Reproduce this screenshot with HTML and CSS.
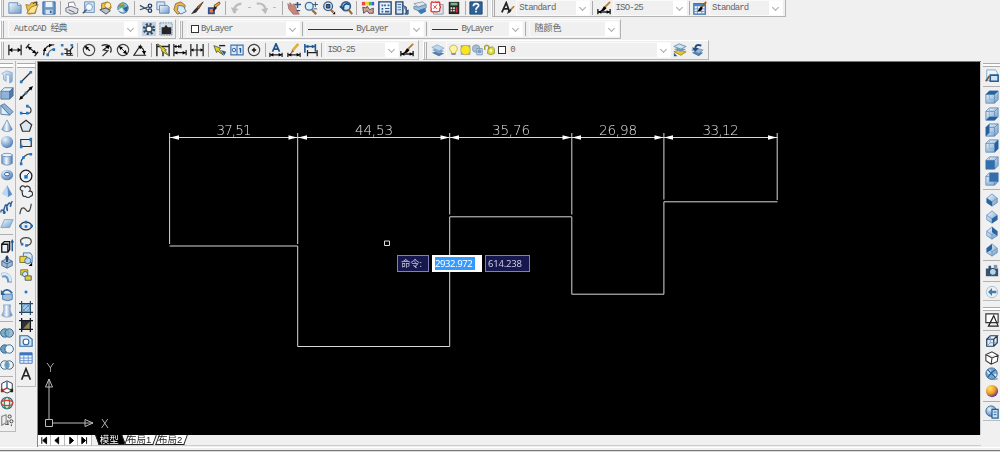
FILE: index.html
```html
<!DOCTYPE html>
<html lang="zh-CN">
<head>
<meta charset="utf-8">
<title>AutoCAD</title>
<link rel="stylesheet" href="styles.css">
</head>
<body>

<!-- icon set -->
<svg class="defs">
  <defs>
    <linearGradient id="gb" x1="0" y1="0" x2="1" y2="1"><stop offset="0" stop-color="#f4faff"/><stop offset="1" stop-color="#6f9cc9"/></linearGradient>
    <linearGradient id="gc"><stop offset="0" stop-color="#6d96c4"/><stop offset=".45" stop-color="#eff7ff"/><stop offset="1" stop-color="#4e7bb0"/></linearGradient>
    <radialGradient id="gs" cx=".35" cy=".3" r=".75"><stop offset="0" stop-color="#e8f4ff"/><stop offset="1" stop-color="#4b78b4"/></radialGradient>
    <radialGradient id="go" cx=".35" cy=".3" r=".75"><stop offset="0" stop-color="#ffe45c"/><stop offset=".55" stop-color="#f09a2c"/><stop offset="1" stop-color="#4a2c98"/></radialGradient>
  </defs>

  <!-- standard toolbar -->
  <symbol id="new" viewBox="0 0 16 16"><path d="M1 2h10l4 3v9H1z" fill="url(#gb)" stroke="#5b86b5"/><path d="M11 2v3h4" fill="#fff" stroke="#5b86b5"/></symbol>
  <symbol id="open" viewBox="0 0 16 16"><path d="M1 4l4 1 2-3 7-1-2 13-8 1z" fill="#e9c046" stroke="#a67d1e"/><path d="M2 14l5-7 8-3-4 10z" fill="#f9e49b" stroke="#a67d1e"/><path d="M9 3l4-2v4" fill="none" stroke="#333"/></symbol>
  <symbol id="save" viewBox="0 0 16 16"><path d="M1 1h14v14H1z" fill="#6b97c9" stroke="#335f94"/><path d="M4 1h8v6H4z" fill="#eaf3fc"/><path d="M4 10h8v5H4z" fill="#d5e2ef"/><path d="M9 11h2v3H9z" fill="#335f94"/></symbol>
  <symbol id="print" viewBox="0 0 16 16"><path d="M4 7V2l6-1 2 5" fill="#fff" stroke="#778"/><path d="M1 8l6-2 8 3-1 5-7 1-6-3z" fill="#dde2ea" stroke="#667"/><path d="M4 10l7 3" stroke="#556"/></symbol>
  <symbol id="preview" viewBox="0 0 16 16"><path d="M3 1h11v12H3z" fill="#d6e7f8" stroke="#5b86b5"/><circle cx="8" cy="7" r="4" fill="#f4faff" stroke="#6d90b6"/><path d="M5 10l-4 4" stroke="#555" stroke-width="2"/></symbol>
  <symbol id="publish" viewBox="0 0 16 16"><path d="M3 3l7-2 4 6-4 6-7-3z" fill="#f3c243" stroke="#8b6a1c"/><circle cx="10" cy="5" r="3.5" fill="#fff0ba" stroke="#a57b1c"/><path d="M1 10l7-2 5 3-5 4z" fill="#b7c1d0" stroke="#445"/></symbol>
  <symbol id="dwf" viewBox="0 0 16 16"><circle cx="8" cy="8" r="6" fill="#82b5d8" stroke="#4c7795"/><path d="M3 6l5-5 2 5-3 4z" fill="#51ad78"/><path d="M8 8l6-2-2 7z" fill="#2f6097"/><path d="M2 11l5-4 2 6z" fill="#e0eef7"/><path d="M5 4l4-1" stroke="#ef8c2c" stroke-width="2"/></symbol>
  <symbol id="cut" viewBox="0 0 16 16"><path d="M1 5l9 5M1 10l9-3" stroke="#3e536c" stroke-width="1.5"/><circle cx="12.500" cy="5.500" r="2" fill="none" stroke="#273d68" stroke-width="1.5"/><circle cx="12.500" cy="11" r="2" fill="none" stroke="#273d68" stroke-width="1.5"/></symbol>
  <symbol id="copy" viewBox="0 0 16 16"><path d="M1 1h9v9H1z" fill="#d6e7f8" stroke="#5b86b5"/><path d="M4 5h9l2 2v7H4z" fill="url(#gb)" stroke="#5b86b5"/></symbol>
  <symbol id="paste" viewBox="0 0 16 16"><path d="M3 3l6-2 5 4-2 8-7 2-4-5z" fill="#e8b74c" stroke="#8f6b25"/><path d="M6 5l6 1 3 6-6 3-4-4z" fill="#dcebfa" stroke="#4c79a8"/></symbol>
  <symbol id="brush" viewBox="0 0 16 16"><path d="M15 1L8 7l2 2z" fill="#a56d2d" stroke="#593716"/><path d="M8 7l2 2-3 4-6 2 4-5z" fill="#333"/></symbol>
  <symbol id="block" viewBox="0 0 16 16"><path d="M14 1L8 5l1 3 6-5z" fill="#f1a23a" stroke="#754c18"/><path d="M2 8h6v6H2z" fill="#ef7b2d" stroke="#334f91" stroke-width="2"/><path d="M8 7l2 1-3 3" stroke="#222" stroke-width="2" fill="none"/></symbol>
  <symbol id="undo" viewBox="0 0 16 16"><path d="M6 14C3 9 6 4 13 3" fill="none" stroke="#bcbcbc" stroke-width="2.4"/><path d="M1 7l3 7 6-5z" fill="#bcbcbc"/></symbol>
  <symbol id="redo" viewBox="0 0 16 16"><path d="M2 3c6-1 10 2 10 8" fill="none" stroke="#bcbcbc" stroke-width="2.4"/><path d="M7 9l5 6 3-7z" fill="#bcbcbc"/></symbol>
  <symbol id="pan" viewBox="0 0 16 16"><path d="M1 3l3 3-1-4 4 3 1-2 3 7 3 5H7L2 9z" fill="#c98579" stroke="#a5736b"/><path d="M12 1v7M9 4h7M11 11h4" stroke="#2f5787" stroke-width="1.7"/></symbol>
  <symbol id="zoomrt" viewBox="0 0 16 16"><circle cx="6" cy="6" r="4.5" fill="#d9efff" stroke="#467099" stroke-width="1.5"/><path d="M9 10l5 5" stroke="#a06b35" stroke-width="2.5"/><path d="M13 1v6M10 4h6M11 9h4" stroke="#284d77"/></symbol>
  <symbol id="zoomwin" viewBox="0 0 16 16"><circle cx="7" cy="6" r="5" fill="#cae4fb" stroke="#365f8b" stroke-width="1.5"/><path d="M5 4h4v4H5z" fill="#456a92" stroke="#223"/><path d="M10 10l3 3" stroke="#a06b35" stroke-width="2.5"/><path d="M15 12v3h-3z"/></symbol>
  <symbol id="zoomprev" viewBox="0 0 16 16"><circle cx="8" cy="6" r="5" fill="#cae4fb" stroke="#365f8b" stroke-width="2"/><path d="M11 10l4 5" stroke="#a06b35" stroke-width="2.5"/><path d="M12 4C7 2 5 4 5 9L1 6" fill="none" stroke="#214e82" stroke-width="2"/></symbol>
  <symbol id="props" viewBox="0 0 16 16"><path d="M1 1h4v4H1z" fill="#e44"/><path d="M5 1h4v4H5z" fill="#f5d42d"/><path d="M9 1h3v4H9z" fill="#3b5"/><path d="M12 1h3v4h-3z" fill="#45d"/><path d="M2 7l4 1 1-2 3 4 4-2v6H9l-2-3-4 3z" fill="#d8a290" stroke="#4a4259"/></symbol>
  <symbol id="dcenter" viewBox="0 0 16 16"><path d="M1 1h14v14H1z" fill="#e8f1fb" stroke="#24446f" stroke-width="1.6"/><path d="M4 4h2v2H4zM7 4h2v2H7zM11 4h2v2h-2zM4 8h2v2H4zM8 8h5v1H8zM4 11h2v2H4zM8 11h5v2H8z" fill="#31619a"/></symbol>
  <symbol id="palette" viewBox="0 0 16 16"><path d="M1 1h8v14H1z" fill="#d6e7f8" stroke="#24446f" stroke-width="1.6"/><path d="M3 4h4M3 7h4M3 10h4" stroke="#31619a"/><path d="M9 5l4 2v7M15 10v5h-4z" stroke="#24446f" fill="#5c8ac0"/></symbol>
  <symbol id="sheets" viewBox="0 0 16 16"><path d="M1 3l10-2 4 3-9 3z" fill="#dbe8f3" stroke="#8499aa"/><path d="M1 6l5 1 9-3v4l-9 3-5-2z" fill="#9fbdd7" stroke="#6e8da8"/><path d="M5 11l9-3 1 4-6 3z" fill="#397abb"/></symbol>
  <symbol id="markup" viewBox="0 0 16 16"><path d="M4 4h11v11H4z" fill="#dce3ea" stroke="#8b96a3"/><path d="M2 1q3 1 4 0 2 1 4 0 2 1 1 4 2 2 0 4 1 3-2 3-2 1-4 0-3 1-4-1 1-2 0-4 1-2 0-4z" fill="#fff" stroke="#e33131" stroke-width="1.4"/><path d="M4 5l4 4M8 4L4 9" stroke="#e33131"/></symbol>
  <symbol id="calc" viewBox="0 0 16 16"><path d="M2 1h12v14H2z" fill="#272727"/><path d="M4 2h8v3H4z" fill="#71b587"/><path d="M4 7h2v2H4zM7 7h2v2H7zM4 10h2v2H4zM7 10h2v2H7z" fill="#ddd"/><path d="M10 7h2v6h-2z" fill="#d33"/></symbol>
  <symbol id="help" viewBox="0 0 16 16"><path d="M1 1h14v14H1z" fill="#2d6296" stroke="#1d436d"/><path d="M5 6c0-4 6-4 6-1 0 2-3 2-3 5" stroke="#fff" stroke-width="2" fill="none"/><path d="M7 11h2v2H7z" fill="#fff"/></symbol>
  <symbol id="textstyle" viewBox="0 0 16 16"><path d="M1 13L6 2l4 11M3 9h6" fill="none" stroke="#222" stroke-width="2"/><path d="M15 6l-4 4" stroke="#b57a2d" stroke-width="2"/><path d="M11 9l1 2-5 4 1-4z" fill="#222"/></symbol>
  <symbol id="dimstyle" viewBox="0 0 16 16"><path d="M15 1L9 7" stroke="#b57a2d" stroke-width="2"/><path d="M8 6l3 2-3 3-4 1z"/><path d="M1 9v6M15 9v6M1 12.5h14" stroke="#222" stroke-width="1.6"/><path d="M1 12.5l4-2v4zM15 12.5l-4-2v4z"/></symbol>
  <symbol id="tabstyle" viewBox="0 0 16 16"><path d="M1 3h13v12H1z" fill="#f0f6ff" stroke="#316bb0" stroke-width="1.5"/><path d="M1 3h13v3H1z" fill="#4b86c8"/><path d="M1 9h13M1 12h13M5 6v9M10 6v9" stroke="#6694cb"/><path d="M15 1l-5 6" stroke="#96642b" stroke-width="2"/><path d="M9 6l2 2-2 3-4 1z"/></symbol>

  <!-- workspace -->
  <symbol id="gear" viewBox="0 0 16 16"><path d="M0 0h16v16H0z" fill="#c3d3e4"/><circle cx="8" cy="8" r="5.500" fill="none" stroke="#354b62" stroke-width="3" stroke-dasharray="2.300 2.020"/><circle cx="8" cy="8" r="3.5" fill="#fff" stroke="#354b62" stroke-width="1.6"/></symbol>
  <symbol id="myspace" viewBox="0 0 16 16"><path d="M1 1h14v14H1z" fill="#d5dfeb" stroke="#6687a9" stroke-dasharray="2 1"/><path d="M3 6h3l2-3 2 3h4v8H3z" fill="#252525"/></symbol>

  <!-- dimension toolbar -->
  <symbol id="dimlin" viewBox="0 0 16 16"><path d="M1 2v12M15 2v12M1 8h14" stroke="#222" stroke-width="1.4"/><path d="M1 8l4-2.500v5zM15 8l-4-2.500v5z"/></symbol>
  <symbol id="dimali" viewBox="0 0 16 16"><path d="M1 6l4-5M11 15l4-5M3 4l10 8" stroke="#222" stroke-width="1.4"/><path d="M3 4l5 1-3 3zM13 12l-5-1 3-3z"/></symbol>
  <symbol id="dimarc" viewBox="0 0 16 16"><path d="M2 14C2 6 6 2 14 2" fill="none" stroke="#222" stroke-width="1.4"/><path d="M7 14c0-4 3-7 7-7" fill="none" stroke="#777" stroke-width="1.4"/><path d="M1 9l2-4 2 4zM8 1l4 1-4 3z"/><path d="M5 12h3v3H5zM12 6h3v3h-3z" fill="#2472b8"/></symbol>
  <symbol id="dimord" viewBox="0 0 16 16"><path d="M1 1h3v3H1zM1 11h3v3H1zM12 1h3v3h-3z" fill="#397cb8"/><path d="M5 7h3v7h7M8 9h3l4-5M5 12h9M12 8v6" fill="none" stroke="#222" stroke-width="1.4"/></symbol>
  <symbol id="dimrad" viewBox="0 0 16 16"><circle cx="8" cy="8" r="6.500" fill="none" stroke="#444" stroke-width="1.3"/><path d="M9 9L4 4" stroke="#111" stroke-width="1.5"/><path d="M3 3l5 2-3 3z"/></symbol>
  <symbol id="dimjog" viewBox="0 0 16 16"><path d="M3 3c8-3 13 2 10 8M10 4L5 8l5 1-6 6" fill="none" stroke="#333" stroke-width="1.5"/><path d="M12 2l-1 5-4-3z"/></symbol>
  <symbol id="dimdia" viewBox="0 0 16 16"><circle cx="8" cy="8" r="6.500" fill="none" stroke="#444" stroke-width="1.3"/><path d="M4 4l8 8" stroke="#111"/><path d="M3 3l5 2-3 3zM13 13l-5-2 3-3z"/></symbol>
  <symbol id="dimang" viewBox="0 0 16 16"><path d="M9 2L1 14h14M7 4c4 1 6 4 6 9" fill="none" stroke="#222" stroke-width="1.4"/><path d="M6 3l5 1-3 3zM13 13l-3-4h5z"/></symbol>
  <symbol id="quick" viewBox="0 0 16 16"><path d="M1 1v14M15 1v14M8 8v7M1 4h14" stroke="#222" stroke-width="1.6"/><path d="M2 1l10 7-2 0 4 6-8-5 1-1z" fill="#e4d72b" stroke="#55501a" stroke-width=".8"/></symbol>
  <symbol id="dimbase" viewBox="0 0 16 16"><path d="M1 1v14M9 1v5M15 8v6M1 4h8M1 11h14" stroke="#222" stroke-width="1.4"/><path d="M1 4l3-2v4zM9 4L6 2v4zM1 11l4-2v4zM15 11l-4-2v4z"/></symbol>
  <symbol id="dimcont" viewBox="0 0 16 16"><path d="M1 1v14M8 1v14M15 1v14M1 8h14" stroke="#222" stroke-width="1.4"/><path d="M1 8l3-2v4zM15 8l-3-2v4z"/></symbol>
  <symbol id="leader" viewBox="0 0 16 16"><path d="M1 3l8 3-2 1 5 7-7-5-1 2z" fill="#d9d527" stroke="#555"/><path d="M7 3h7" stroke="#222" stroke-width="1.6"/><path d="M9 8l4 6 2-4z" fill="#285a8c"/></symbol>
  <symbol id="tol" viewBox="0 0 16 16"><path d="M1 2.500h14v11H1zM8 3v10" fill="#dceafb" stroke="#3e72ae" stroke-width="1.3"/><circle cx="4.500" cy="8" r="2" fill="none" stroke="#245795"/><path d="M10.500 6.500H12V11" stroke="#245795" stroke-width="1.5" fill="none"/></symbol>
  <symbol id="center" viewBox="0 0 16 16"><circle cx="8" cy="8" r="6.500" fill="none" stroke="#444" stroke-width="1.3"/><path d="M8 5.500v5M5.500 8h5" stroke="#111" stroke-width="1.6"/></symbol>
  <symbol id="dimedit" viewBox="0 0 16 16"><path d="M4 10L8 1l4 9M5 7h6" fill="none" stroke="#1e548d" stroke-width="2"/><path d="M1 11v5M15 11v5M1 13.500h14" stroke="#222" stroke-width="1.4"/><path d="M1 13.500l4-2v4zM15 13.500l-4-2v4z"/></symbol>
  <symbol id="dimtedit" viewBox="0 0 16 16"><path d="M13 1L6 9" stroke="#dfb32f" stroke-width="3"/><path d="M6 8l-2 4 4-2z" fill="#a15a3a"/><path d="M1 11v5M15 11v5M1 13.500h14" stroke="#222" stroke-width="1.4"/><path d="M1 13.500l4-2v4zM15 13.500l-4-2v4z"/></symbol>
  <symbol id="dimupd" viewBox="0 0 16 16"><path d="M1 1v10M13 1v9M1 4h12" stroke="#24588e" stroke-width="1.8"/><path d="M4 8v7M15 8v7M4 11h11" stroke="#222" stroke-width="1.4"/><path d="M1 4l4-2v4zM13 4L9 2v4z" fill="#24588e"/></symbol>

  <!-- layers -->
  <symbol id="layers" viewBox="0 0 16 16"><path d="M1 11l6-2 8 3-6 3z" fill="#537cad"/><path d="M1 8l6-2 8 3-6 3z" fill="#7fa6cc"/><path d="M1 5l6-3 8 4-6 3z" fill="#bdd7ed" stroke="#759abd" stroke-width=".7"/></symbol>
  <symbol id="bulb" viewBox="0 0 16 16"><path d="M5 11C0 6 3 1 8 1s8 5 3 10v2H5z" fill="#fff3a0" stroke="#a8953d"/><path d="M5 13h6v2H5z" fill="#778"/></symbol>
  <symbol id="sun" viewBox="0 0 16 16"><path d="M1 1h14v14H1z" fill="#8fa9b5"/><circle cx="8" cy="8" r="6.800" fill="#f8e624" stroke="#cba921"/></symbol>
  <symbol id="freeze" viewBox="0 0 16 16"><circle cx="6" cy="6" r="5.500" fill="#a8bed2" stroke="#7892aa"/><path d="M7 6h8v9H7z" fill="#dce6ef" stroke="#5e7f9f"/><circle cx="11" cy="10" r="3" fill="#7ba0c2"/></symbol>
  <symbol id="lock" viewBox="0 0 16 16"><path d="M1 8V3q3-4 6 0v4" fill="none" stroke="#a4a33a" stroke-width="2.2"/><path d="M6 6l6-3 3 3v7l-5 2-5-2z" fill="#dadd3a" stroke="#7e7e26"/><circle cx="10" cy="9" r="2" fill="#fafac5"/></symbol>
  <symbol id="laycur" viewBox="0 0 16 16"><path d="M1 10l6-2 8 2-6 4z" fill="#e1c52c" stroke="#9d8721"/><path d="M1 7l6-2 8 2-6 3z" fill="#6e99c0"/><path d="M1 4l6-3 8 3-6 3z" fill="#cfe2f2" stroke="#658dae"/><path d="M1 15v-4l4 4z" fill="#245893"/></symbol>
  <symbol id="layprev" viewBox="0 0 16 16"><path d="M2 11l6-2 7 2-5 4z" fill="#557da8"/><path d="M2 8l6-2 7 2-5 4z" fill="#97b7d3" stroke="#5d82a8" stroke-width=".7"/><path d="M13 3C8 1 6 3 6 7" fill="none" stroke="#214e82" stroke-width="2.300"/><path d="M2 5l8 1-4 4z" fill="#214e82"/></symbol>

  <!-- modeling -->
  <symbol id="polysolid" viewBox="0 0 16 16"><path d="M2 4l6-3 6 2v10l-3 2V6L7 5v8l-3-2V6z" fill="url(#gb)" stroke="#7fa4cc" stroke-width=".8"/></symbol>
  <symbol id="box" viewBox="0 0 16 16"><path d="M1 6h10v9H1z" fill="#8fb2d7"/><path d="M1 6l4-4h10l-4 4z" fill="#e8f2fc"/><path d="M11 6l4-4v9l-4 4z" fill="#4f7bad"/><path d="M1 6h10v9H1zM1 6l4-4h10v9l-4 4M11 6l4-4" fill="none" stroke="#365c88" stroke-width=".8"/></symbol>
  <symbol id="wedge" viewBox="0 0 16 16"><path d="M1 4l4-2 10 9-4 4z" fill="#8fb4d9" stroke="#4c759f"/><path d="M1 4v10l10 1z" fill="#dcecfa" stroke="#4c759f"/></symbol>
  <symbol id="cone" viewBox="0 0 16 16"><path d="M8 1l6 11q-6 5-12 0z" fill="url(#gc)" stroke="#6586aa" stroke-width=".8"/></symbol>
  <symbol id="sphere" viewBox="0 0 16 16"><circle cx="8" cy="8" r="7" fill="url(#gs)"/></symbol>
  <symbol id="cyl" viewBox="0 0 16 16"><path d="M2 3v10q6 4 12 0V3z" fill="url(#gc)" stroke="#527aa8" stroke-width=".8"/><ellipse cx="8" cy="3.500" rx="6" ry="2" fill="#e8f3ff" stroke="#527aa8" stroke-width=".8"/></symbol>
  <symbol id="torus" viewBox="0 0 16 16"><ellipse cx="8" cy="8" rx="7" ry="6" fill="url(#gs)"/><ellipse cx="8" cy="7" rx="3" ry="2" fill="#f4faff" stroke="#2d5a8c"/></symbol>
  <symbol id="pyr" viewBox="0 0 16 16"><path d="M8 1l6 11-5 3z" fill="#5e8fc5"/><path d="M8 1l1 14-7-4z" fill="#b9d7f2"/></symbol>
  <symbol id="helix" viewBox="0 0 16 16"><path d="M1 13q0-4 3-2t1 3 0-6 3-1 0 3 1-6 3-1 0 3 2-6" fill="none" stroke="#2f5f9b" stroke-width="1.6"/></symbol>
  <symbol id="plane" viewBox="0 0 16 16"><path d="M5 3h10l-4 9H1z" fill="url(#gb)" stroke="#7ea2cc"/></symbol>
  <symbol id="extr" viewBox="0 0 16 16"><path d="M2 6h7v9H2zM2 6l3-3h6v9l-2 3" fill="#e9eff6" stroke="#111" stroke-width="1.5"/><path d="M14 14V3" stroke="#1d5598" stroke-width="1.6"/><path d="M12 4l2-4 2 4z" fill="#1d5598"/></symbol>
  <symbol id="press" viewBox="0 0 16 16"><path d="M2 7l6-3 6 3v5l-6 3-6-3z" fill="#9db9d6" stroke="#46658a"/><path d="M2 7l6 3 6-3M8 10v5" fill="none" stroke="#46658a"/><path d="M8 8V2" stroke="#183c6b" stroke-width="2"/><path d="M5.500 4L8 0l2.500 4z" fill="#183c6b"/></symbol>
  <symbol id="sweep" viewBox="0 0 16 16"><path d="M2 5c6-2 9 2 9 8" fill="none" stroke="#6d95c0" stroke-width="5.500"/><path d="M2 4c6-2 10 2 10 8" fill="none" stroke="#dbeaf8" stroke-width="2.800"/></symbol>
  <symbol id="revolve" viewBox="0 0 16 16"><path d="M3 7h11v6q-5 3-11 0z" fill="#9cc1e4" stroke="#4876a4"/><path d="M14 6C10 1 6 1 3 5" fill="none" stroke="#2d659e" stroke-width="2"/><path d="M1 2v6h5z" fill="#2d659e"/></symbol>
  <symbol id="loft" viewBox="0 0 16 16"><path d="M4 1h8q-2 6 2 12-6 4-12 0 4-6 2-12z" fill="url(#gc)" stroke="#7598bf" stroke-width=".8"/></symbol>
  <symbol id="union" viewBox="0 0 16 16"><circle cx="5.500" cy="8" r="4.800" fill="#7fb0c9" stroke="#285b83"/><circle cx="10.500" cy="8" r="4.800" fill="#7fb0c9" fill-opacity=".8" stroke="#285b83"/></symbol>
  <symbol id="subtract" viewBox="0 0 16 16"><circle cx="5.500" cy="8" r="4.800" fill="#6ba0c6" stroke="#285b83"/><circle cx="10.500" cy="8" r="4.800" fill="#eef5fb" stroke="#285b83"/></symbol>
  <symbol id="intersect" viewBox="0 0 16 16"><circle cx="5.500" cy="8" r="4.800" fill="#edf5fb" stroke="#285b83"/><circle cx="10.500" cy="8" r="4.800" fill="none" stroke="#285b83"/><path d="M8 4q4 4 0 8-4-4 0-8z" fill="#5f9cc5"/></symbol>
  <symbol id="move3" viewBox="0 0 16 16"><path d="M2 4l6-3 6 3v8l-6 3-6-3z" fill="#fff" stroke="#334" stroke-width="1.1"/><path d="M8 9V2" stroke="#2d69b0" stroke-width="1.6"/><path d="M8 9l5 3" stroke="#2c8d4b" stroke-width="1.6"/><path d="M8 9l-5 3" stroke="#d22" stroke-width="1.6"/><path d="M1 10h3v4H1z" fill="#a22"/><path d="M12 10h3v4h-3z" fill="#222"/></symbol>
  <symbol id="rot3" viewBox="0 0 16 16"><circle cx="8" cy="8" r="6.500" fill="none" stroke="#326594" stroke-width="1.4"/><ellipse cx="8" cy="8" rx="3" ry="6.500" fill="none" stroke="#35955b" stroke-width="1.5"/><ellipse cx="8" cy="8" rx="6.500" ry="3" fill="none" stroke="#d63b32" stroke-width="1.5"/></symbol>
  <symbol id="align3" viewBox="0 0 16 16"><path d="M2 14V4l5-2v9z" fill="#eee" stroke="#888" stroke-width="1.3"/><circle cx="11" cy="4" r="1.800" fill="none" stroke="#333"/><circle cx="13" cy="9.500" r="1.800" fill="none" stroke="#333"/><path d="M9 8v5M6 13h4M13 13v2" stroke="#333" fill="none"/></symbol>

  <!-- draw -->
  <symbol id="line" viewBox="0 0 16 16"><path d="M2 14L14 2" stroke="#333" stroke-width="1.5"/><path d="M1 12h3v3H1zM12 1h3v3h-3z" fill="#2176c4"/></symbol>
  <symbol id="xline" viewBox="0 0 16 16"><path d="M2 14L14 2" stroke="#222" stroke-width="1.8"/><path d="M0 16l2-5 3 3zM16 0l-5 2 3 3z"/><path d="M6.500 6.500h3v3h-3z" fill="#4a6f96"/></symbol>
  <symbol id="pline" viewBox="0 0 16 16"><path d="M2 12h8c5 0 5-7 0-8" fill="none" stroke="#444" stroke-width="1.4"/><path d="M1 10h3v3H1zM8 10h3v3H8zM8 2h3v3H8z" fill="#2176c4"/></symbol>
  <symbol id="polygon" viewBox="0 0 16 16"><path d="M8 1.500l6.500 5L12 14H4L1.500 6.500z" fill="#dfe8f0" stroke="#333" stroke-width="1.4"/></symbol>
  <symbol id="rect" viewBox="0 0 16 16"><path d="M2 4h12v8H2z" fill="#e4edf6" stroke="#333" stroke-width="1.4"/><path d="M1 10h3v4H1zM12 2h3v4h-3z" fill="#2176c4"/></symbol>
  <symbol id="arc" viewBox="0 0 16 16"><path d="M2 14C2 8 7 2 14 2" fill="none" stroke="#444" stroke-width="1.4"/><path d="M1 12h3v3H1zM3.500 5h3v3h-3zM12 1h3v3h-3z" fill="#2176c4"/></symbol>
  <symbol id="circle" viewBox="0 0 16 16"><circle cx="8" cy="8" r="6.700" fill="#edf4fa" stroke="#222" stroke-width="1.5"/><path d="M7 9l5-5" stroke="#222"/><path d="M6 7h4v4H6z" fill="#2176c4"/></symbol>
  <symbol id="cloud" viewBox="0 0 16 16"><path d="M4 7a3 3 0 1 1 3-4.500A3 3 0 1 1 12 7a3 3 0 0 1 1 6 3.500 3.500 0 0 1-5.500 0A2.800 2.800 0 0 1 4 9.500 2 2 0 0 1 4 7z" fill="#eef3f8" stroke="#333" stroke-width="1.3"/></symbol>
  <symbol id="spline" viewBox="0 0 16 16"><path d="M1 14C2 6 5 5 8 9s5 1 6-7" fill="none" stroke="#444" stroke-width="1.4"/></symbol>
  <symbol id="ellipse" viewBox="0 0 16 16"><ellipse cx="8" cy="8" rx="6.500" ry="4.500" fill="#e4edf6" stroke="#333" stroke-width="1.4"/><path d="M0 6.500h3v3H0zM13 6.500h3v3h-3zM6.500 7h3v3h-3zM6.500 2h3v3h-3z" fill="#2176c4"/></symbol>
  <symbol id="earc" viewBox="0 0 16 16"><path d="M3 10C0 6 3 3 8 3c8 0 8 9 0 9" fill="none" stroke="#444" stroke-width="1.4"/><path d="M2 9h3v3H2zM7 10.500h3v3H7z" fill="#2176c4"/></symbol>
  <symbol id="insert" viewBox="0 0 16 16"><path d="M5 1h8l2 3v8H5z" fill="#dce9f7" stroke="#336fa5"/><path d="M1 5h8v7H1z" fill="#ecd63c" stroke="#756c26"/><circle cx="10" cy="10" r="3.500" fill="#bcd6ec" stroke="#356a9a"/><path d="M15 12v4h-4z"/></symbol>
  <symbol id="mkblock" viewBox="0 0 16 16"><path d="M2 2h8v6H2z" fill="#ecd63c" stroke="#756c26"/><circle cx="7" cy="7" r="3" fill="#d8e8f5" stroke="#316896"/><path d="M7 9h7v5H7z" fill="#e7cb39" stroke="#405b67"/></symbol>
  <symbol id="point" viewBox="0 0 16 16"><path d="M6.500 6.500h3v3h-3z" fill="#2176c4"/></symbol>
  <symbol id="hatch" viewBox="0 0 16 16"><path d="M3 3h10v10H3z" fill="#9fc8ea"/><path d="M3 0v16M13 0v16M0 3h16M0 13h16" stroke="#24435f" stroke-width="1.3"/><path d="M3 8l5-5M3 13L13 3M8 13l5-5M3 8l5 5M8 3l5 5" stroke="#3d75a6" stroke-width=".8"/></symbol>
  <symbol id="grad" viewBox="0 0 16 16"><path d="M3 3h10v10H3z" fill="#30303a"/><path d="M13 3v10H4z" fill="#96854d"/><path d="M3 0v16M13 0v16M0 3h16M0 13h16" stroke="#151b26" stroke-width="1.5"/></symbol>
  <symbol id="region" viewBox="0 0 16 16"><path d="M1 2h9l5 4v8H1z" fill="#d5e7f7" stroke="#32679b" stroke-width="1.3"/><circle cx="8" cy="9" r="3.300" fill="#fff" stroke="#32679b" stroke-width="1.3"/></symbol>
  <symbol id="table" viewBox="0 0 16 16"><path d="M1 2h14v12H1z" fill="#f1f7ff" stroke="#3d74bd"/><path d="M1 2h14v3H1z" fill="#3d74bd"/><path d="M1 8h14M1 11h14M5.500 5v9M10.500 5v9" stroke="#6492cf"/></symbol>
  <symbol id="mtext" viewBox="0 0 16 16"><path d="M3 14.500L8 2l5 12.500M5 10h6" fill="none" stroke="#222" stroke-width="1.9"/></symbol>

  <!-- views -->
  <symbol id="named" viewBox="0 0 16 16"><path d="M2 1h10l2 3v9H2z" fill="#edf5fc" stroke="#7ea1c1"/><path d="M6 7h9v7H6z" fill="#cfe2f4" stroke="#235c91" stroke-width="1.8"/><path d="M1 14l4-6" stroke="#80592f" stroke-width="2"/></symbol>
  <symbol id="cube" viewBox="0 0 16 16"><path d="M1 5l4-4h10v10l-4 4H1z" fill="url(#gb)"/><path d="M1 5h10v10H1zM1 5l4-4h10l-4 4M15 1v10l-4 4" fill="none" stroke="#5f8cb8"/><path d="M5 1v10h10M5 11l-4 4" stroke="#8db2d3" fill="none"/></symbol>
  <symbol id="vtop" viewBox="0 0 16 16"><use href="#cube"/><path d="M1 5l4-4h10l-4 4z" fill="#27609d"/></symbol>
  <symbol id="vbot" viewBox="0 0 16 16"><use href="#cube"/><path d="M1 15l4-4h10l-4 4z" fill="#27609d"/></symbol>
  <symbol id="vleft" viewBox="0 0 16 16"><use href="#cube"/><path d="M1 5l4-4v10l-4 4z" fill="#27609d"/></symbol>
  <symbol id="vright" viewBox="0 0 16 16"><use href="#cube"/><path d="M11 5l4-4v10l-4 4z" fill="#27609d"/></symbol>
  <symbol id="vfront" viewBox="0 0 16 16"><use href="#cube"/><path d="M1 5h10v10H1z" fill="#336fae"/></symbol>
  <symbol id="vback" viewBox="0 0 16 16"><use href="#cube"/><path d="M5 1h10v10H5z" fill="#336fae"/></symbol>
  <symbol id="iso" viewBox="0 0 16 16"><path d="M8 1l6 5v5l-6 4-6-4V6z" fill="url(#gb)" stroke="#6c96c0"/><path d="M2 6l6 4 6-4M8 10v5" fill="none" stroke="#6c96c0"/></symbol>
  <symbol id="sw" viewBox="0 0 16 16"><use href="#iso"/><path d="M2 6l6 4v5l-6-4z" fill="#2b639d"/></symbol>
  <symbol id="se" viewBox="0 0 16 16"><use href="#iso"/><path d="M8 10l6-4v5l-6 4z" fill="#2b639d"/></symbol>
  <symbol id="ne" viewBox="0 0 16 16"><use href="#iso"/><path d="M8 1l6 5v5L8 7z" fill="#2b639d"/></symbol>
  <symbol id="nw" viewBox="0 0 16 16"><use href="#iso"/><path d="M8 1L2 6v5l6-4z" fill="#2b639d"/></symbol>
  <symbol id="camera" viewBox="0 0 16 16"><path d="M1 5h3V2h3v3h8v9H1z" fill="#39536e"/><circle cx="9" cy="9" r="4" fill="#b4d4ec" stroke="#18314c"/><path d="M10 1h4v4h-4z" fill="#779aba"/></symbol>
  <symbol id="back" viewBox="0 0 16 16"><circle cx="8" cy="8" r="6.500" fill="#eaf1f7" stroke="#a9bccd"/><path d="M8 3.500L3.500 8 8 12.500V9.500h5v-3H8z" fill="#497aa8"/></symbol>
  <symbol id="wire2d" viewBox="0 0 16 16"><path d="M1 1h14v10H1z" fill="#fff" stroke="#333" stroke-width="1.3"/><path d="M4 15L10 3l5 12z" fill="none" stroke="#222" stroke-width="1.4"/></symbol>
  <symbol id="wire3d" viewBox="0 0 16 16"><path d="M2 6h8v8H2zM2 6l4-4h8l-4 4M14 2v8l-4 4" fill="#e5eef7" stroke="#233c5b" stroke-width="1.4"/><path d="M6 2v8h8M6 10l-4 4" fill="none" stroke="#7496b8"/></symbol>
  <symbol id="hidden" viewBox="0 0 16 16"><path d="M8 1l7 4-1 7-7 3-6-4V4zM1 4l7 4 7-3M8 8l-1 7" fill="#fff" stroke="#333" stroke-width="1.2"/></symbol>
  <symbol id="realistic" viewBox="0 0 16 16"><ellipse cx="10" cy="13.500" rx="5" ry="1.500" fill="#aaa"/><circle cx="7.500" cy="7.500" r="6.500" fill="#71a8d3" stroke="#376593"/><path d="M2 5q5-5 5 2-3 3-5-2zM9 9q5-3 4 1-3 4-4-1z" fill="#d5ebfa"/><path d="M3 3q4 4 9 9M12 3Q8 5 3 12" stroke="#2b5f92" stroke-width="1.3" fill="none"/></symbol>
  <symbol id="concept" viewBox="0 0 16 16"><circle cx="8" cy="8" r="7" fill="url(#go)"/></symbol>
  <symbol id="vsman" viewBox="0 0 16 16"><circle cx="7" cy="7" r="6" fill="url(#gs)" stroke="#2d628f"/><path d="M8 5h7v10H8z" fill="#c7def3" stroke="#256195" stroke-width="1.4"/><path d="M10 8h3M10 11h3" stroke="#256195"/></symbol>
</svg>

<div class="toolbars">
  <div class="row row1">
    <div class="bar">
      <i class="grip"></i>
      <svg class="ic"><use href="#new"/></svg><svg class="ic"><use href="#open"/></svg><svg class="ic"><use href="#save"/></svg>
      <i class="sep"></i>
      <svg class="ic"><use href="#print"/></svg><svg class="ic"><use href="#preview"/></svg><svg class="ic"><use href="#publish"/></svg><svg class="ic"><use href="#dwf"/></svg>
      <i class="sep"></i>
      <svg class="ic"><use href="#cut"/></svg><svg class="ic"><use href="#copy"/></svg><svg class="ic"><use href="#paste"/></svg><svg class="ic"><use href="#brush"/></svg><svg class="ic"><use href="#block"/></svg>
      <i class="sep"></i>
      <svg class="ic"><use href="#undo"/></svg><i class="caret"></i><svg class="ic"><use href="#redo"/></svg><i class="caret wide"></i>
      <i class="sep"></i>
      <svg class="ic"><use href="#pan"/></svg><svg class="ic"><use href="#zoomrt"/></svg><svg class="ic"><use href="#zoomwin"/></svg><svg class="ic"><use href="#zoomprev"/></svg>
      <i class="sep"></i>
      <svg class="ic"><use href="#props"/></svg><svg class="ic"><use href="#dcenter"/></svg><svg class="ic"><use href="#palette"/></svg><svg class="ic"><use href="#sheets"/></svg><svg class="ic"><use href="#markup"/></svg><svg class="ic"><use href="#calc"/></svg>
      <i class="sep"></i>
      <svg class="ic"><use href="#help"/></svg>
    </div>
    <div class="bar styles">
      <i class="grip"></i>
      <svg class="ic"><use href="#textstyle"/></svg>
      <div class="combo w74">Standard<b></b></div>
      <i class="sep"></i>
      <svg class="ic"><use href="#dimstyle"/></svg>
      <div class="combo w73">ISO-25<b></b></div>
      <i class="sep"></i>
      <svg class="ic"><use href="#tabstyle"/></svg>
      <div class="combo w74">Standard<b></b></div>
    </div>
  </div>

  <div class="row row2">
    <div class="bar workspace">
      <i class="grip"></i>
      <div class="combo w130">AutoCAD 经典<b></b></div>
      <svg class="ic"><use href="#gear"/></svg><svg class="ic"><use href="#myspace"/></svg>
    </div>
    <div class="bar props">
      <i class="grip"></i>
      <div class="combo w112"><i class="swatch"></i>ByLayer<b></b></div>
      <i class="sep"></i>
      <div class="combo w119"><i class="lt"></i>ByLayer<b></b></div>
      <i class="sep"></i>
      <div class="combo w93"><i class="lt short"></i>ByLayer<b></b></div>
      <i class="sep"></i>
      <div class="combo w89">随颜色<b></b></div>
    </div>
  </div>

  <div class="row row3">
    <div class="bar">
      <i class="grip"></i>
      <svg class="ic"><use href="#dimlin"/></svg><svg class="ic"><use href="#dimali"/></svg><svg class="ic"><use href="#dimarc"/></svg><svg class="ic"><use href="#dimord"/></svg>
      <i class="sep"></i>
      <svg class="ic"><use href="#dimrad"/></svg><svg class="ic"><use href="#dimjog"/></svg><svg class="ic"><use href="#dimdia"/></svg><svg class="ic"><use href="#dimang"/></svg>
      <i class="sep"></i>
      <svg class="ic"><use href="#quick"/></svg><svg class="ic"><use href="#dimbase"/></svg><svg class="ic"><use href="#dimcont"/></svg>
      <i class="sep"></i>
      <svg class="ic"><use href="#leader"/></svg><svg class="ic"><use href="#tol"/></svg><svg class="ic"><use href="#center"/></svg>
      <i class="sep"></i>
      <svg class="ic"><use href="#dimedit"/></svg><svg class="ic"><use href="#dimtedit"/></svg><svg class="ic"><use href="#dimupd"/></svg>
      <i class="sep"></i>
      <div class="combo w74">ISO-25<b></b></div>
      <svg class="ic"><use href="#dimstyle"/></svg>
    </div>
    <div class="bar layerbar">
      <i class="grip"></i>
      <svg class="ic"><use href="#layers"/></svg>
      <div class="combo w225">
        <svg class="sm"><use href="#bulb"/></svg><svg class="sm"><use href="#sun"/></svg><svg class="sm"><use href="#freeze"/></svg><svg class="sm"><use href="#lock"/></svg><i class="swatch"></i>0<b></b>
      </div>
      <svg class="ic"><use href="#laycur"/></svg><svg class="ic"><use href="#layprev"/></svg>
    </div>
  </div>
</div>

<div class="main">
  <div class="col model">
    <i class="hgrip"></i>
    <svg class="ic"><use href="#polysolid"/></svg><svg class="ic"><use href="#box"/></svg><svg class="ic"><use href="#wedge"/></svg><svg class="ic"><use href="#cone"/></svg><svg class="ic"><use href="#sphere"/></svg><svg class="ic"><use href="#cyl"/></svg><svg class="ic"><use href="#torus"/></svg><svg class="ic"><use href="#pyr"/></svg><svg class="ic"><use href="#helix"/></svg><svg class="ic"><use href="#plane"/></svg>
    <i class="hsep"></i>
    <svg class="ic"><use href="#extr"/></svg><svg class="ic"><use href="#press"/></svg><svg class="ic"><use href="#sweep"/></svg><svg class="ic"><use href="#revolve"/></svg><svg class="ic"><use href="#loft"/></svg>
    <i class="hsep"></i>
    <svg class="ic"><use href="#union"/></svg><svg class="ic"><use href="#subtract"/></svg><svg class="ic"><use href="#intersect"/></svg>
    <i class="hsep"></i>
    <svg class="ic"><use href="#move3"/></svg><svg class="ic"><use href="#rot3"/></svg><svg class="ic"><use href="#align3"/></svg>
  </div>

  <div class="col draw">
    <i class="hgrip"></i>
    <svg class="ic"><use href="#line"/></svg><svg class="ic"><use href="#xline"/></svg><svg class="ic"><use href="#pline"/></svg><svg class="ic"><use href="#polygon"/></svg><svg class="ic"><use href="#rect"/></svg><svg class="ic"><use href="#arc"/></svg><svg class="ic"><use href="#circle"/></svg><svg class="ic"><use href="#cloud"/></svg><svg class="ic"><use href="#spline"/></svg><svg class="ic"><use href="#ellipse"/></svg><svg class="ic"><use href="#earc"/></svg><svg class="ic"><use href="#insert"/></svg><svg class="ic"><use href="#mkblock"/></svg><svg class="ic"><use href="#point"/></svg><svg class="ic"><use href="#hatch"/></svg><svg class="ic"><use href="#grad"/></svg><svg class="ic"><use href="#region"/></svg><svg class="ic"><use href="#table"/></svg><svg class="ic"><use href="#mtext"/></svg>
  </div>

  <div class="work">
    <div class="canvas">
      <svg class="drawing" viewBox="38 62 942 373">
        <!-- dimension and extension lines -->
        <g class="ln">
          <path d="M169.600 137.500H777.300"/>
          <path d="M169.600 133V244M297.700 133V244M449.700 133V214.500M571.800 133V214.500M663.900 133V199.500M777.200 133V200"/>
          <path d="M169.600 246H297.700V346.500H449.700V216.800H571.800V294.200H663.900V201.800H777.500"/>
        </g>
        <g class="arrows">
          <path d="M170 137.500l9-2.200v4.400zM298 137.500l9-2.200v4.400zM450 137.500l9-2.200v4.400zM572 137.500l9-2.200v4.400zM664 137.500l9-2.200v4.400z"/>
          <path d="M297.500 137.500l-9-2.200v4.400zM449.500 137.500l-9-2.200v4.400zM571.500 137.500l-9-2.200v4.400zM663.500 137.500l-9-2.200v4.400zM777 137.500l-9-2.200v4.400z"/>
        </g>
        <g class="dims">
          <text x="216.500" y="135" textLength="35">37,51</text>
          <text x="355" y="135" textLength="38">44,53</text>
          <text x="492" y="135" textLength="38">35,76</text>
          <text x="599" y="135" textLength="38">26,98</text>
          <text x="702.500" y="135" textLength="36">33,12</text>
        </g>
        <!-- pick box -->
        <path class="pick" d="M384.500 241h5v4.500h-5z"/>
        <!-- ucs icon -->
        <g class="ucs">
          <path d="M45.500 419.500h7v7h-7zM49 419.500V379M52.500 423H93M45.500 387L49 379l3.500 8zM85 419.500l8 3.500-8 3.500z"/>
          <text x="46.500" y="372">Y</text>
          <text x="100.500" y="428">X</text>
        </g>
      </svg>
      <div class="dyn">
        <span class="tip">命令:</span>
        <span class="tip input"><mark>2932.972</mark></span>
        <span class="tip num">614.238</span>
      </div>
    </div>
    <div class="tabs">
      <div class="nav">
        <svg viewBox="0 0 13 11"><path d="M4 2v7M9 2L5 5.500 9 9z"/></svg>
        <svg viewBox="0 0 13 11"><path d="M8 2L4 5.500 8 9z"/></svg>
        <svg viewBox="0 0 13 11"><path d="M5 2l4 3.500L5 9z"/></svg>
        <svg viewBox="0 0 13 11"><path d="M9 2v7M4 2l4 3.500L4 9z"/></svg>
      </div>
      <span class="tab on">模型</span><span class="tab">布局1</span><span class="tab">布局2</span>
    </div>
  </div>

  <div class="side">
    <div class="col">
      <i class="hgrip"></i>
      <svg class="ic"><use href="#named"/></svg>
      <i class="hsep"></i>
      <svg class="ic"><use href="#vtop"/></svg><svg class="ic"><use href="#vbot"/></svg><svg class="ic"><use href="#vleft"/></svg><svg class="ic"><use href="#vright"/></svg><svg class="ic"><use href="#vfront"/></svg><svg class="ic"><use href="#vback"/></svg>
      <i class="hsep"></i>
      <svg class="ic"><use href="#sw"/></svg><svg class="ic"><use href="#se"/></svg><svg class="ic"><use href="#ne"/></svg><svg class="ic"><use href="#nw"/></svg>
      <i class="hsep"></i>
      <svg class="ic"><use href="#camera"/></svg>
      <i class="hsep"></i>
      <svg class="ic"><use href="#back"/></svg>
    </div>
    <div class="col visual">
      <i class="hgrip"></i>
      <svg class="ic"><use href="#wire2d"/></svg>
      <i class="hsep"></i>
      <svg class="ic"><use href="#wire3d"/></svg><svg class="ic"><use href="#hidden"/></svg><svg class="ic"><use href="#realistic"/></svg><svg class="ic"><use href="#concept"/></svg>
      <i class="hsep"></i>
      <svg class="ic"><use href="#vsman"/></svg>
    </div>
  </div>
</div>
<div class="footer"></div>

</body>
</html>
```
FILE: styles.css
```css
* {
  box-sizing: border-box;
}

body {
  margin: 0;
  width: 1000px;
  height: 452px;
  overflow: hidden;
  background: #f0f0f0;
  font-family: "Liberation Mono", "Noto Sans CJK SC", monospace;
  font-size: 9px;
  color: #666;
  display: flex;
  flex-direction: column;
}

.defs {
  position: absolute;
  width: 0;
  height: 0;
}

/* toolbars */
.toolbars {
  height: 61px;
  flex: none;
}

.row {
  display: flex;
}

.row1 { height: 18px; }
.row2 { height: 21px; }
.row3 { height: 22px; }

.bar {
  display: flex;
  align-items: center;
  flex: none;
  border-right: 1px solid #b4b4b4;
  border-bottom: 1px solid #b4b4b4;
}

.row1 .bar {
  height: 17px;
  padding-right: 2px;
}

.row2 .bar {
  height: 20px;
  margin-top: 1px;
  border-top: 1px solid #fff;
}

.row3 .bar {
  height: 20px;
  margin-top: 1px;
  border-top: 1px solid #fff;
}

.grip {
  flex: none;
  width: 4px;
  height: 17px;
  margin-right: 2.4px;
  border-left: 1px solid #fff;
  border-right: 1px solid #aaa;
  box-shadow: inset 1px 0 #bbb;
}

.ic {
  flex: none;
  display: block;
  width: 14px;
  height: 14px;
  margin: 0 1.6px;
}

.sep {
  flex: none;
  width: 5.2px;
  height: 14px;
  background: linear-gradient(#aaa, #aaa) 2px 0 / 1px 100% no-repeat;
}

.caret {
  flex: none;
  width: 7.8px;
  height: 3px;
  background: linear-gradient(#bbb, #bbb) 3px 0 / 3px 1px no-repeat;
}

.wide {
  width: 10px;
}

.combo {
  flex: none;
  display: flex;
  align-items: center;
  height: 16px;
  padding-left: 2px;
  border: 1px solid #fafafa;
  background: #f0f0f0;
  letter-spacing: -0.85px;
  white-space: nowrap;
  line-height: 14px;
}

.combo b {
  display: flex;
  align-items: center;
  justify-content: center;
  width: 13px;
  height: 14px;
  margin-left: auto;
  background: #fff;
}

.combo b::after {
  content: "";
  width: 4px;
  height: 4px;
  margin-top: -2px;
  border: solid #aaa;
  border-width: 0 1px 1px 0;
  transform: rotate(45deg);
}

.w73 { width: 74px; }
.w74 { width: 74px; }
.w89 { width: 90px; padding-left: 5px; letter-spacing: 0; }
.w93 { width: 94px; }
.w112 { width: 113px; padding-left: 0; }
.w119 { width: 119px; }
.w130 { width: 130px; margin-right: 2px; padding-left: 5px; }
.w225 { width: 225px; padding-left: 1px; }

.styles {
  margin-left: 3px;
}

.styles .grip {
  margin-right: 4px;
}

.workspace .grip,
.props .grip {
  margin-right: 4px;
}

.workspace {
  width: 176px;
}

.props {
  margin-left: 3px;
  padding-right: 1px;
}

.layerbar {
  margin-left: 4px;
  padding-right: 2px;
}

.row3 .bar:first-child {
  padding-right: 2px;
}

.swatch {
  width: 8px;
  height: 8px;
  margin: 0 2px 0 3px;
  border: 1px solid #333;
  background: #fff;
}

.lt {
  width: 45px;
  height: 1px;
  margin-right: 3px;
  background: #333;
}

.short {
  width: 26px;
}

.sm {
  width: 11px;
  height: 12px;
  margin-right: 1px;
}

.w225 .swatch {
  margin: 0 4px 0 2px;
}

/* work area */
.main {
  display: flex;
  height: 386px;
  flex: none;
}

.col {
  display: flex;
  flex-direction: column;
  align-items: center;
  border-right: 1px solid #bbb;
  border-bottom: 1px solid #bbb;
}

.col .ic {
  margin: 1.2px 0;
}

.model {
  width: 16px;
  height: 371px;
  padding-right: 2px;
}

.draw {
  width: 19px;
  height: 326px;
  margin-left: 1px;
}

.draw .ic {
  margin: 1.27px 0;
}

.hgrip {
  flex: none;
  width: 100%;
  height: 5px;
  margin: 2px 0 0.5px;
  border-top: 1px solid #aaa;
  border-bottom: 1px solid #aaa;
  background: #fff;
}

.hsep {
  flex: none;
  width: 100%;
  height: 5.2px;
  background: linear-gradient(#b0b0b0, #b0b0b0) 0 2px / 100% 1px no-repeat;
}

.work {
  width: 944px;
  margin-left: 1px;
  border-top: 1px solid #777;
  border-left: 1px solid #888;
}

.canvas {
  position: relative;
  width: 943px;
  height: 373px;
  background: #000;
  border-right: 1px solid #ccc;
}

.drawing {
  display: block;
  width: 942px;
  height: 373px;
  will-change: transform;
}

.ln path {
  fill: none;
  stroke: #d8d8d8;
  stroke-width: 1;
}

.arrows {
  fill: #fff;
}

.dims {
  fill: #e4e4e4;
  font: 200 13.5px "DejaVu Sans", sans-serif;
}

.pick {
  fill: none;
  stroke: #ddd;
}

.ucs {
  fill: none;
  stroke: #bbb;
}

.ucs text {
  fill: #ddd;
  stroke: none;
  font: 200 12.5px "DejaVu Sans", sans-serif;
}

/* dynamic input floats next to the cursor */
.dyn {
  position: absolute;
  left: 359px;
  top: 193px;
  display: flex;
  gap: 3px;
}

.tip {
  width: 32px;
  height: 17px;
  padding-left: 3px;
  border: 1px solid #8080b8;
  background: #171750;
  color: #c8c8dc;
  font: 9.5px/15px "Noto Sans", "Noto Sans CJK SC", sans-serif;
  letter-spacing: -0.2px;
  white-space: nowrap;
}

.input {
  width: 50px;
  padding-left: 2px;
  border-color: #fff;
  background: #fff;
}

.num {
  width: 45px;
  padding-left: 2px;
}

mark {
  display: block;
  width: 40px;
  height: 13px;
  margin-top: 1px;
  line-height: 13px;
  letter-spacing: -0.4px;
  background: #3399ff;
  color: #fff;
}

/* layout tabs */
.tabs {
  display: flex;
  height: 11px;
  border-bottom: 1px solid #ccc;
  color: #222;
  font: 9.5px/10px "Liberation Sans", "Noto Sans CJK SC", sans-serif;
}

.nav {
  display: flex;
  margin-right: 3.5px;
  background: #fff;
}

.nav svg {
  width: 13.4px;
  height: 11px;
  border-right: 1px solid #bbb;
  fill: #000;
  stroke: #000;
}

.tab {
  position: relative;
  z-index: 0;
  width: 31px;
  text-align: center;
}

.tab::before {
  content: "";
  position: absolute;
  z-index: -1;
  inset: 0 0 0 2px;
  border: 1px solid #222;
  border-top: 0;
  background: #fff;
  transform: skewX(-20deg);
}

.on {
  width: 28.5px;
  color: #fff;
}

.on::before {
  background: #000;
  transform: skewX(20deg);
}

/* right side */
.side {
  flex: none;
  width: 17px;
  margin-left: 2px;
}

.side .col {
  border-right: 0;
}

.side .hgrip {
  height: 4px;
  margin-bottom: 1px;
}

.side .hsep {
  height: 4.8px;
}

.visual {
  margin-top: 4px;
}

.footer {
  height: 5px;
  border-top: 1px solid #fff;
  background: linear-gradient(#f0f0f0 2px, #777 2px, #777 3px, #ddd 3px);
}
```
